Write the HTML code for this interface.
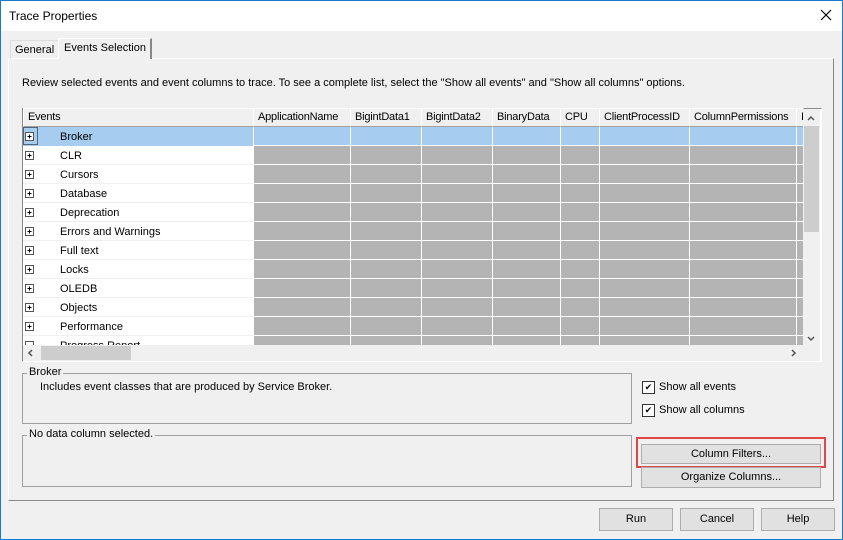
<!DOCTYPE html><html><head><style>
*{box-sizing:border-box;margin:0;padding:0}
body{width:843px;height:540px;background:#f0f0f0;font-family:"Liberation Sans",sans-serif;font-size:11px;color:#000;position:relative;overflow:hidden}
.a{position:absolute;white-space:nowrap}
.win{left:0;top:0;width:843px;height:540px;border:1px solid #1979ca}
.btn{position:absolute;background:#e1e1e1;border:1px solid #adadad;text-align:center;line-height:20px}
.hd{position:absolute;top:108px;height:19px;background:#f0f0f0;border:1px solid #fff;border-right-color:#a0a0a0;border-bottom-color:#a0a0a0;padding-left:4px;line-height:17px;white-space:nowrap;overflow:hidden;letter-spacing:-0.2px}
.cb{position:absolute;width:13px;height:13px;border:1px solid #333;background:#fff;font-size:9px;line-height:11px;text-align:center}
.grp{position:absolute;border:1px solid #a0a0a0}
.grp span{position:absolute;top:-8px;left:6px;background:#f0f0f0;padding:0 2px;white-space:nowrap}
</style></head><body>
<div class="a win"></div>
<div class="a" style="left:1px;top:1px;width:841px;height:30px;background:#fff"></div>
<div class="a" style="left:9px;top:9px;font-size:12px">Trace Properties</div>
<svg class="a" style="left:820px;top:9px" width="12" height="12"><path d="M1 1L11 11M11 1L1 11" stroke="#000" stroke-width="1.2"/></svg>
<div class="a" style="left:8px;top:58px;width:826px;height:443px;border:1px solid #fff;border-right-color:#888;border-bottom-color:#888"></div>
<div class="a" style="left:10px;top:40px;width:49px;height:19px;border:1px solid #ddd;border-bottom:none;padding:3px 0 0 4px">General</div>
<div class="a" style="left:58px;top:38px;width:94px;height:21px;background:#f0f0f0;border:1px solid #fff;border-right:2px solid #888;border-bottom:none;padding:3px 0 0 5px">Events Selection</div>
<div class="a" style="left:22px;top:77px">Review selected events and event columns to trace. To see a complete list, select the "Show all events" and "Show all columns" options.</div>
<div class="a" style="left:22px;top:108px;width:800px;height:254px;border:1px solid #888;border-right-color:#fff;border-bottom-color:#fff;background:#fff;overflow:hidden">
<div class="a" style="left:231px;top:18px;width:550px;height:220px;background:#b4b4b4"></div>
<div class="a" style="left:0;top:18px;width:781px;height:19px;background:#a6cdf0"></div>
</div>
<div class="hd" style="left:23px;width:231px">Events</div>
<div class="hd" style="left:253px;width:98px">ApplicationName</div>
<div class="hd" style="left:350px;width:72px">BigintData1</div>
<div class="hd" style="left:421px;width:72px">BigintData2</div>
<div class="hd" style="left:492px;width:69px">BinaryData</div>
<div class="hd" style="left:560px;width:40px">CPU</div>
<div class="hd" style="left:599px;width:91px">ClientProcessID</div>
<div class="hd" style="left:689px;width:108px">ColumnPermissions</div>
<div class="hd" style="left:796px;width:8px">I</div>
<svg class="a" style="left:23px;top:127px" width="780" height="218">
<g stroke="#fff" stroke-width="1">
<path d="M230.5 0V218M327.5 0V218M398.5 0V218M469.5 0V218M537.5 0V218M576.5 0V218M666.5 0V218M773.5 0V218"/>
<path d="M231 18.5H780M231 37.5H780M231 56.5H780M231 75.5H780M231 94.5H780M231 113.5H780M231 132.5H780M231 151.5H780M231 170.5H780M231 189.5H780M231 208.5H780"/>
</g>
<g stroke="#f0f0f0"><path d="M0 37.5H230M0 56.5H230M0 75.5H230M0 94.5H230M0 113.5H230M0 132.5H230M0 151.5H230M0 170.5H230M0 189.5H230M0 208.5H230"/></g>
<rect x="0.5" y="0.5" width="14" height="17" fill="none" stroke="#000" stroke-dasharray="1 1"/>
<g font-family="Liberation Sans" font-size="11" fill="#000">
<text x="37" y="13">Broker</text><text x="37" y="32">CLR</text><text x="37" y="51">Cursors</text><text x="37" y="70">Database</text><text x="37" y="89">Deprecation</text><text x="37" y="108">Errors and Warnings</text><text x="37" y="127">Full text</text><text x="37" y="146">Locks</text><text x="37" y="165">OLEDB</text><text x="37" y="184">Objects</text><text x="37" y="203">Performance</text><text x="37" y="222">Progress Report</text>
</g>
<g fill="#fff" stroke="#555"><rect x="2.5" y="5.5" width="8" height="8"/><rect x="2.5" y="24.5" width="8" height="8"/><rect x="2.5" y="43.5" width="8" height="8"/><rect x="2.5" y="62.5" width="8" height="8"/><rect x="2.5" y="81.5" width="8" height="8"/><rect x="2.5" y="100.5" width="8" height="8"/><rect x="2.5" y="119.5" width="8" height="8"/><rect x="2.5" y="138.5" width="8" height="8"/><rect x="2.5" y="157.5" width="8" height="8"/><rect x="2.5" y="176.5" width="8" height="8"/><rect x="2.5" y="195.5" width="8" height="8"/><rect x="2.5" y="214.5" width="8" height="8"/></g>
<g stroke="#000"><path d="M4.5 9.5H8.5M6.5 7.5V11.5M4.5 28.5H8.5M6.5 26.5V30.5M4.5 47.5H8.5M6.5 45.5V49.5M4.5 66.5H8.5M6.5 64.5V68.5M4.5 85.5H8.5M6.5 83.5V87.5M4.5 104.5H8.5M6.5 102.5V106.5M4.5 123.5H8.5M6.5 121.5V125.5M4.5 142.5H8.5M6.5 140.5V144.5M4.5 161.5H8.5M6.5 159.5V163.5M4.5 180.5H8.5M6.5 178.5V182.5M4.5 199.5H8.5M6.5 197.5V201.5"/></g>
</svg>
<div class="a" style="left:803px;top:109px;width:17px;height:236px;background:#f0f0f0"></div>
<div class="a" style="left:804px;top:126px;width:15px;height:106px;background:#cdcdcd"></div>
<div class="a" style="left:23px;top:345px;width:797px;height:16px;background:#f0f0f0"></div>
<div class="a" style="left:41px;top:346px;width:90px;height:14px;background:#cdcdcd"></div>
<svg class="a" style="left:23px;top:109px" width="798" height="252" fill="none" stroke="#555" stroke-width="1.5">
<path d="M785 11L788 8L791 11M785 228L788 231L791 228M9 241L6 244L9 247M769 241L772 244L769 247"/></svg>
<div class="grp" style="left:22px;top:373px;width:610px;height:51px"><span style="left:4px">Broker</span></div>
<div class="a" style="left:40px;top:381px">Includes event classes that are produced by Service Broker.</div>
<div class="grp" style="left:22px;top:435px;width:610px;height:52px"><span style="left:4px">No data column selected.</span></div>
<div class="cb" style="left:642px;top:381px">✔</div><div class="a" style="left:659px;top:381px">Show all events</div>
<div class="cb" style="left:642px;top:404px">✔</div><div class="a" style="left:659px;top:404px">Show all columns</div>
<div class="a" style="left:636px;top:437px;width:190px;height:31px;border:2px solid #e04747"></div>
<div class="btn" style="left:641px;top:444px;width:180px;height:20px;line-height:18px">Column Filters...</div>
<div class="btn" style="left:641px;top:467px;width:180px;height:21px;line-height:19px">Organize Columns...</div>
<div class="btn" style="left:599px;top:508px;width:74px;height:23px">Run</div>
<div class="btn" style="left:680px;top:508px;width:74px;height:23px">Cancel</div>
<div class="btn" style="left:761px;top:508px;width:74px;height:23px">Help</div>
</body></html>
